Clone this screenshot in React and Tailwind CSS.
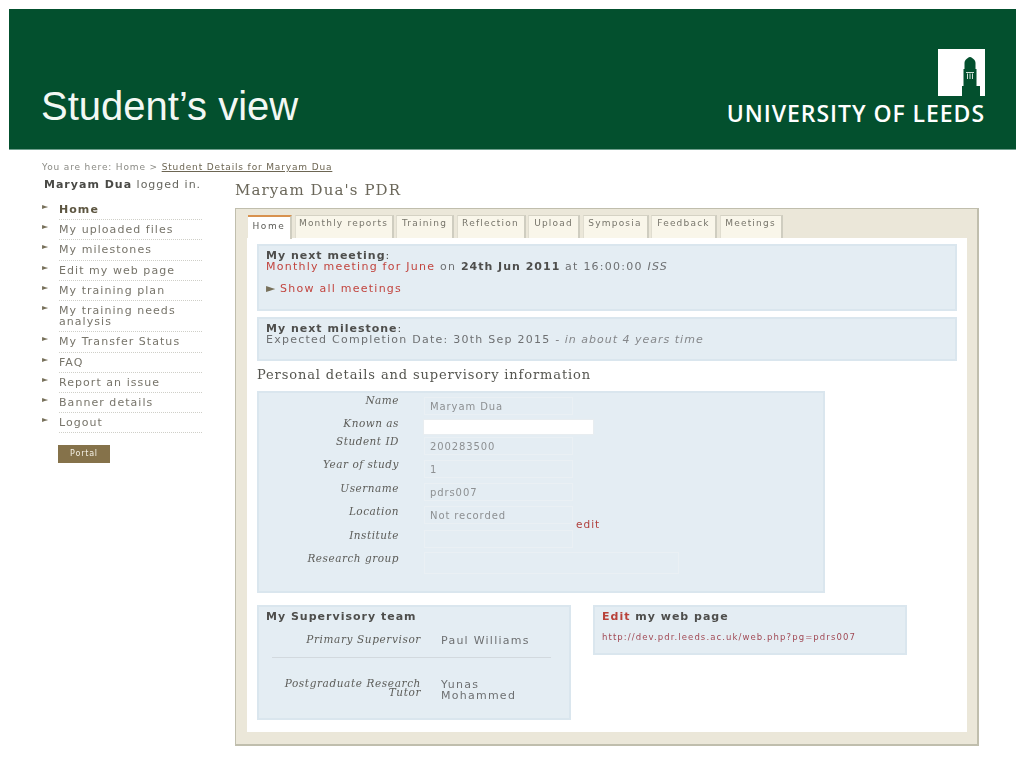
const navItems = [
  ['Home', true],
  ['My uploaded files'],
  ['My milestones'],
  ['Edit my web page'],
  ['My training plan'],
  ['My training needs analysis'],
  ['My Transfer Status'],
  ['FAQ'],
  ['Report an issue'],
  ['Banner details'],
  ['Logout'],
];

const tabs = [
  ['Monthly reports', 'w-[99px]'],
  ['Training', 'w-[58px]'],
  ['Reflection', 'w-[69px]'],
  ['Upload', 'w-[52px]'],
  ['Symposia', 'w-[66px]'],
  ['Feedback', 'w-[66px]'],
  ['Meetings', 'w-[63px]'],
];

const fields = [
  ['Name', 'Maryam Dua', '', 'h-[23px]', 'pt-0'],
  ['Known as', '', 'input', 'h-[17px]', 'pt-0'],
  ['Student ID', '200283500', '', 'h-[23px]', 'pt-[1px]'],
  ['Year of study', '1', '', 'h-[23px]', 'pt-[1px]'],
  ['Username', 'pdrs007', '', 'h-[23px]', 'pt-[2px]'],
  ['Location', 'Not recorded', 'edit', 'h-[24px]', 'pt-[2px]'],
  ['Institute', '', '', 'h-[22px]', 'pt-[2px]'],
  ['Research group', '', 'wide', 'h-[23px]', 'pt-[3px]'],
];

const sans = "font-['DejaVu_Sans',sans-serif]";
const serif = "font-['DejaVu_Serif',serif]";
const panel = 'border-2 border-[#dae6ee] bg-[#e4edf3]';

function Sidebar() {
  return (
    <aside className="w-[193px] shrink-0">
      <p className="text-[9px] leading-[12px] tracking-[0.85px] whitespace-nowrap text-[#8a8a84]">
        You are here: Home &gt; <span className="text-[#6d6653] underline">Student Details for Maryam Dua</span>
      </p>
      <p className="mt-[5px] ml-[2px] text-[11px] leading-[14px] tracking-[1px] text-[#66665f]">
        <b className="text-[#4a4a46]">Maryam Dua</b> logged in.
      </p>
      <ul className="mt-[8px] w-[160px]">
        {navItems.map(([label, active]) => (
          <li key={label} className="flex">
            <span className="w-[17px] shrink-0 pt-[2px] text-[8px] leading-[10px] text-[#77705a]">►</span>
            <span
              className={`flex-1 border-b border-dotted border-[#cfcfc8] pt-[4px] pb-[4px] text-[11px] leading-[11.2px] tracking-[1.05px] ${
                active ? 'font-bold text-[#5d5641]' : 'text-[#77746a]'
              }`}
            >
              {label}
            </span>
          </li>
        ))}
      </ul>
      <button className="mt-[12px] ml-[16px] flex h-[18px] w-[52px] items-center justify-center bg-[#85724a] text-[8px] tracking-[0.8px] text-[#f4f0e4]">
        Portal
      </button>
    </aside>
  );
}

function Tabs() {
  return (
    <div className="flex h-[23px] gap-[2.5px] pl-[12px]">
      <div className="z-10 flex h-[24px] w-[44px] items-center justify-center border-t-2 border-r-2 border-t-[#d8924f] border-r-[#cfcdc0] bg-white pb-[3px] text-[9px] tracking-[1.6px] text-[#5a5a55]">
        Home
      </div>
      {tabs.map(([label, width]) => (
        <div
          key={label}
          className={`${width} border-t border-r-2 border-l border-t-[#d5d2c4] border-r-[#cfcdc0] border-l-[#e0ddd0] bg-[#f9f6ea] pt-[2px] text-center text-[9px] leading-[11px] tracking-[1.2px] text-[#77756b]`}
        >
          {label}
        </div>
      ))}
    </div>
  );
}

function FormRow({ label, value, kind, height, labelPad }) {
  return (
    <div className={`flex ${height}`}>
      <div className={`${serif} ${labelPad} w-[140px] shrink-0 text-right text-[10.5px] leading-[14px] tracking-[0.5px] text-[#5c5c58] italic`}>
        {label}
      </div>
      {kind === 'input' ? (
        <div className="mt-[4px] ml-[25px] h-[14px] w-[169px] bg-white shadow-[0_0_0_1px_#e8edf0]" />
      ) : (
        <div
          className={`mt-[4px] ml-[25px] border border-[#eaf0f4] pl-[5px] text-[10px] leading-[18px] tracking-[0.9px] text-[#8d9092] ${
            kind === 'wide' ? 'h-[22px] w-[255px]' : 'h-[18px] w-[149px]'
          }`}
        >
          {value}
        </div>
      )}
      {kind === 'edit' && <span className="mt-[15px] ml-[3px] text-[10.5px] leading-[14px] tracking-[1px] text-[#b0403c]">edit</span>}
    </div>
  );
}

function Content() {
  return (
    <div className="flex flex-1 flex-col gap-[6px] px-[10px] pt-[6px] text-[11px] tracking-[1.25px] text-[#6e7072]">
      <section className={`${panel} h-[67px] px-[7px] pt-[3.5px] leading-[11px]`}>
        <p className="font-bold tracking-[1px] text-[#4e4e4c]">My next meeting<span className="font-normal">:</span></p>
        <p>
          <span className="text-[#c2453f]">Monthly meeting for June</span> on <b className="tracking-[1px] text-[#4e4e4c]">24th Jun 2011</b> at 16:00:00 <i>ISS</i>
        </p>
        <p className="mt-[11px] flex items-center gap-[3.5px] text-[#c2453f]">
          <span className="text-[12px] text-[#77705a]">►</span> Show all meetings
        </p>
      </section>

      <section className={`${panel} h-[44px] px-[7px] pt-[3.5px] leading-[11px]`}>
        <p className="font-bold tracking-[1px] text-[#4e4e4c]">My next milestone<span className="font-normal">:</span></p>
        <p>Expected Completion Date: 30th Sep 2015 <i className="tracking-[1px] text-[#85878a]">- in about 4 years time</i></p>
      </section>

      <h2 className={`${serif} text-[13px] leading-[16px] tracking-[0.87px] text-[#55554f]`}>
        Personal details and supervisory information
      </h2>

      <section className={`${panel} mt-[2px] h-[202px] w-[568px]`}>
        {fields.map(([label, value, kind, height, labelPad]) => (
          <FormRow key={label} label={label} value={value} kind={kind} height={height} labelPad={labelPad} />
        ))}
      </section>

      <div className="mt-[6px] flex items-start gap-[22px]">
        <section className={`${panel} h-[115px] w-[314px] px-[7px] pt-[3px]`}>
          <h3 className="leading-[14px] font-bold tracking-[1px] text-[#4e4e4c]">My Supervisory team</h3>
          <div className="mt-[9px] flex h-[24px]">
            <div className={`${serif} w-[155px] text-right text-[10.5px] leading-[12px] tracking-[0.6px] text-[#5c5c58] italic`}>Primary Supervisor</div>
            <div className="ml-[20px] pt-[2px] leading-[12px]">Paul Williams</div>
          </div>
          <div className="mr-[11px] ml-[6px] border-b border-[#d2d9de]" />
          <div className="mt-[21px] flex">
            <div className={`${serif} w-[155px] text-right text-[10.5px] leading-[8.5px] tracking-[0.6px] text-[#5c5c58] italic`}>Postgraduate Research Tutor</div>
            <div className="ml-[20px] w-[90px] leading-[11px]">Yunas Mohammed</div>
          </div>
        </section>
        <section className={`${panel} h-[50px] w-[314px] px-[7px] pt-[3px]`}>
          <h3 className="leading-[14px] font-bold tracking-[1px] text-[#4e4e4c]"><span className="text-[#b8423a]">Edit</span> my web page</h3>
          <p className="mt-[8px] text-[8.5px] leading-[11px] tracking-[1.09px] whitespace-nowrap text-[#a14a55]">http://dev.pdr.leeds.ac.uk/web.php?pg=pdrs007</p>
        </section>
      </div>
    </div>
  );
}

export default function App() {
  return (
    <div className={`${sans} flex h-[768px] w-[1024px] flex-col overflow-hidden bg-white pt-[9px]`}>
      <header className="mr-[8px] ml-[9px] flex h-[141px] shrink-0 justify-between border-b border-[#6f9f8d] bg-[#03502e] pr-[31px] pl-[32px]">
        <h1 className="mb-[20px] self-end font-['Liberation_Sans',sans-serif] text-[40px] leading-[46px] text-[#f3f8f4]">Student’s view</h1>
        <div className="flex flex-col items-end pt-[40px]">
          <svg width="47" height="47" viewBox="0 0 47 47" className="mb-[8px]">
            <rect width="47" height="47" fill="#fff" />
            <path
              d="M24 47V37h1.500V20h1V14c0-2 1-3 1.500-3.500 1-1 2.500-2.500 4-2.500s3 1.500 4 2.500c.5.5 1.500 1.500 1.500 3.500v6h1v17H42v10z"
              fill="#03502e"
            />
            <path d="M28 23h8v1h-8zM29 24.500h1V30h-1zM31.500 24.500h1V30h-1zM34 24.500h1V30h-1z" fill="#cfe0d6" />
          </svg>
          <div className="font-['Open_Sans',sans-serif] text-[23px] leading-[18px] font-semibold tracking-[0.95px] whitespace-nowrap text-white">
            UNIVERSITY OF LEEDS
          </div>
        </div>
      </header>

      <main className="flex flex-1 pt-[11px] pl-[42px] blur-[0.35px]">
        <Sidebar />
        <div className="min-w-0 flex-1">
          <h1 className={`${serif} mt-[20px] text-[15px] leading-[18px] tracking-[1.1px] text-[#6b675a]`}>Maryam Dua's PDR</h1>
          <div className="mt-[9px] flex h-[538px] w-[744px] flex-col border border-r-2 border-b-2 border-[#c0bead] bg-[#ebe7d9] pt-[6px]">
            <Tabs />
            <div className="mr-[10px] mb-[12px] ml-[11px] flex flex-1 flex-col bg-white">
              <Content />
            </div>
          </div>
        </div>
      </main>
    </div>
  );
}
